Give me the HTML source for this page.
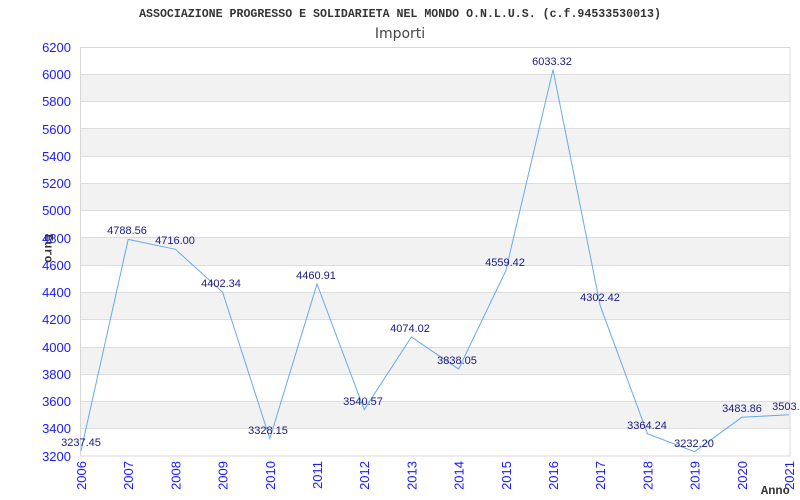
<!DOCTYPE html>
<html><head><meta charset="utf-8"><style>
html,body{margin:0;padding:0;background:#fff;width:800px;height:500px;overflow:hidden}
svg{display:block}
</style></head><body>
<svg width="800" height="500" xmlns="http://www.w3.org/2000/svg">
<g fill="#f2f2f2">
<rect x="81" y="74.3" width="709" height="27.3"/>
<rect x="81" y="128.8" width="709" height="27.3"/>
<rect x="81" y="183.4" width="709" height="27.3"/>
<rect x="81" y="237.9" width="709" height="27.3"/>
<rect x="81" y="292.5" width="709" height="27.3"/>
<rect x="81" y="347" width="709" height="27.3"/>
<rect x="81" y="401.6" width="709" height="27.3"/>
</g>
<g stroke="#dddddd" stroke-width="1">
<line x1="81" x2="790" y1="74.5" y2="74.5"/><line x1="81" x2="790" y1="101.5" y2="101.5"/>
<line x1="81" x2="790" y1="128.5" y2="128.5"/><line x1="81" x2="790" y1="156.5" y2="156.5"/>
<line x1="81" x2="790" y1="183.5" y2="183.5"/><line x1="81" x2="790" y1="210.5" y2="210.5"/>
<line x1="81" x2="790" y1="237.5" y2="237.5"/><line x1="81" x2="790" y1="265.5" y2="265.5"/>
<line x1="81" x2="790" y1="292.5" y2="292.5"/><line x1="81" x2="790" y1="319.5" y2="319.5"/>
<line x1="81" x2="790" y1="347.5" y2="347.5"/><line x1="81" x2="790" y1="374.5" y2="374.5"/>
<line x1="81" x2="790" y1="401.5" y2="401.5"/><line x1="81" x2="790" y1="428.5" y2="428.5"/>
</g>
<rect x="80.5" y="47.5" width="709.5" height="408.5" fill="none" stroke="#d8d8d8"/>
<text x="400" y="17" text-anchor="middle" font-family="Liberation Mono, monospace" font-weight="bold" font-size="11.6" fill="#333">ASSOCIAZIONE PROGRESSO E SOLIDARIETA NEL MONDO O.N.L.U.S. (c.f.94533530013)</text>
<text x="400" y="38" text-anchor="middle" font-family="DejaVu Sans, sans-serif" font-size="14" fill="#444">Importi</text>
<g font-family="Liberation Sans, sans-serif" font-size="13" fill="#1a1aff" text-anchor="end">
<text x="71" y="52">6200</text><text x="71" y="79">6000</text><text x="71" y="106">5800</text>
<text x="71" y="134">5600</text><text x="71" y="161">5400</text><text x="71" y="188">5200</text>
<text x="71" y="215">5000</text><text x="71" y="243">4800</text><text x="71" y="270">4600</text>
<text x="71" y="297">4400</text><text x="71" y="324">4200</text><text x="71" y="352">4000</text>
<text x="71" y="379">3800</text><text x="71" y="406">3600</text><text x="71" y="433">3400</text>
<text x="71" y="461">3200</text>
</g>
<g font-family="Liberation Sans, sans-serif" font-size="13" fill="#1a1aff" text-anchor="end">
<text transform="translate(86,461) rotate(-90)">2006</text>
<text transform="translate(133.2,461) rotate(-90)">2007</text>
<text transform="translate(180.4,461) rotate(-90)">2008</text>
<text transform="translate(227.6,461) rotate(-90)">2009</text>
<text transform="translate(274.8,461) rotate(-90)">2010</text>
<text transform="translate(322,461) rotate(-90)">2011</text>
<text transform="translate(369.2,461) rotate(-90)">2012</text>
<text transform="translate(416.4,461) rotate(-90)">2013</text>
<text transform="translate(463.6,461) rotate(-90)">2014</text>
<text transform="translate(510.8,461) rotate(-90)">2015</text>
<text transform="translate(558,461) rotate(-90)">2016</text>
<text transform="translate(605.2,461) rotate(-90)">2017</text>
<text transform="translate(652.4,461) rotate(-90)">2018</text>
<text transform="translate(699.6,461) rotate(-90)">2019</text>
<text transform="translate(746.8,461) rotate(-90)">2020</text>
<text transform="translate(794,461) rotate(-90)">2021</text>
</g>
<text transform="translate(45,234) rotate(90)" font-family="Liberation Mono, monospace" font-weight="bold" font-size="12" fill="#333">Euro</text>
<text x="761" y="494" font-family="Liberation Mono, monospace" font-weight="bold" font-size="12" fill="#333">Anno</text>
<polyline fill="none" stroke="#66aaee" stroke-width="1" points="81,450.9 128.2,239.4 175.4,249.3 222.6,292.1 269.8,438.6 317,284.1 364.2,409.6 411.4,336.9 458.6,369.1 505.8,270.7 553,69.7 600.2,305.7 647.4,433.7 694.6,451.7 741.8,417.3 789,414.7"/>
<g font-family="Liberation Sans, sans-serif" font-size="11" fill="#1a1a80" text-anchor="middle">
<text x="81" y="446">3237.45</text>
<text x="127" y="234">4788.56</text>
<text x="175" y="244">4716.00</text>
<text x="221" y="287">4402.34</text>
<text x="268" y="434">3328.15</text>
<text x="316" y="279">4460.91</text>
<text x="363" y="405">3540.57</text>
<text x="410" y="332">4074.02</text>
<text x="457" y="364">3838.05</text>
<text x="505" y="266">4559.42</text>
<text x="552" y="65">6033.32</text>
<text x="600" y="301">4302.42</text>
<text x="647" y="429">3364.24</text>
<text x="694" y="447">3232.20</text>
<text x="742" y="412">3483.86</text>
<text x="789" y="410">3503.5</text>
</g>
</svg>
</body></html>
